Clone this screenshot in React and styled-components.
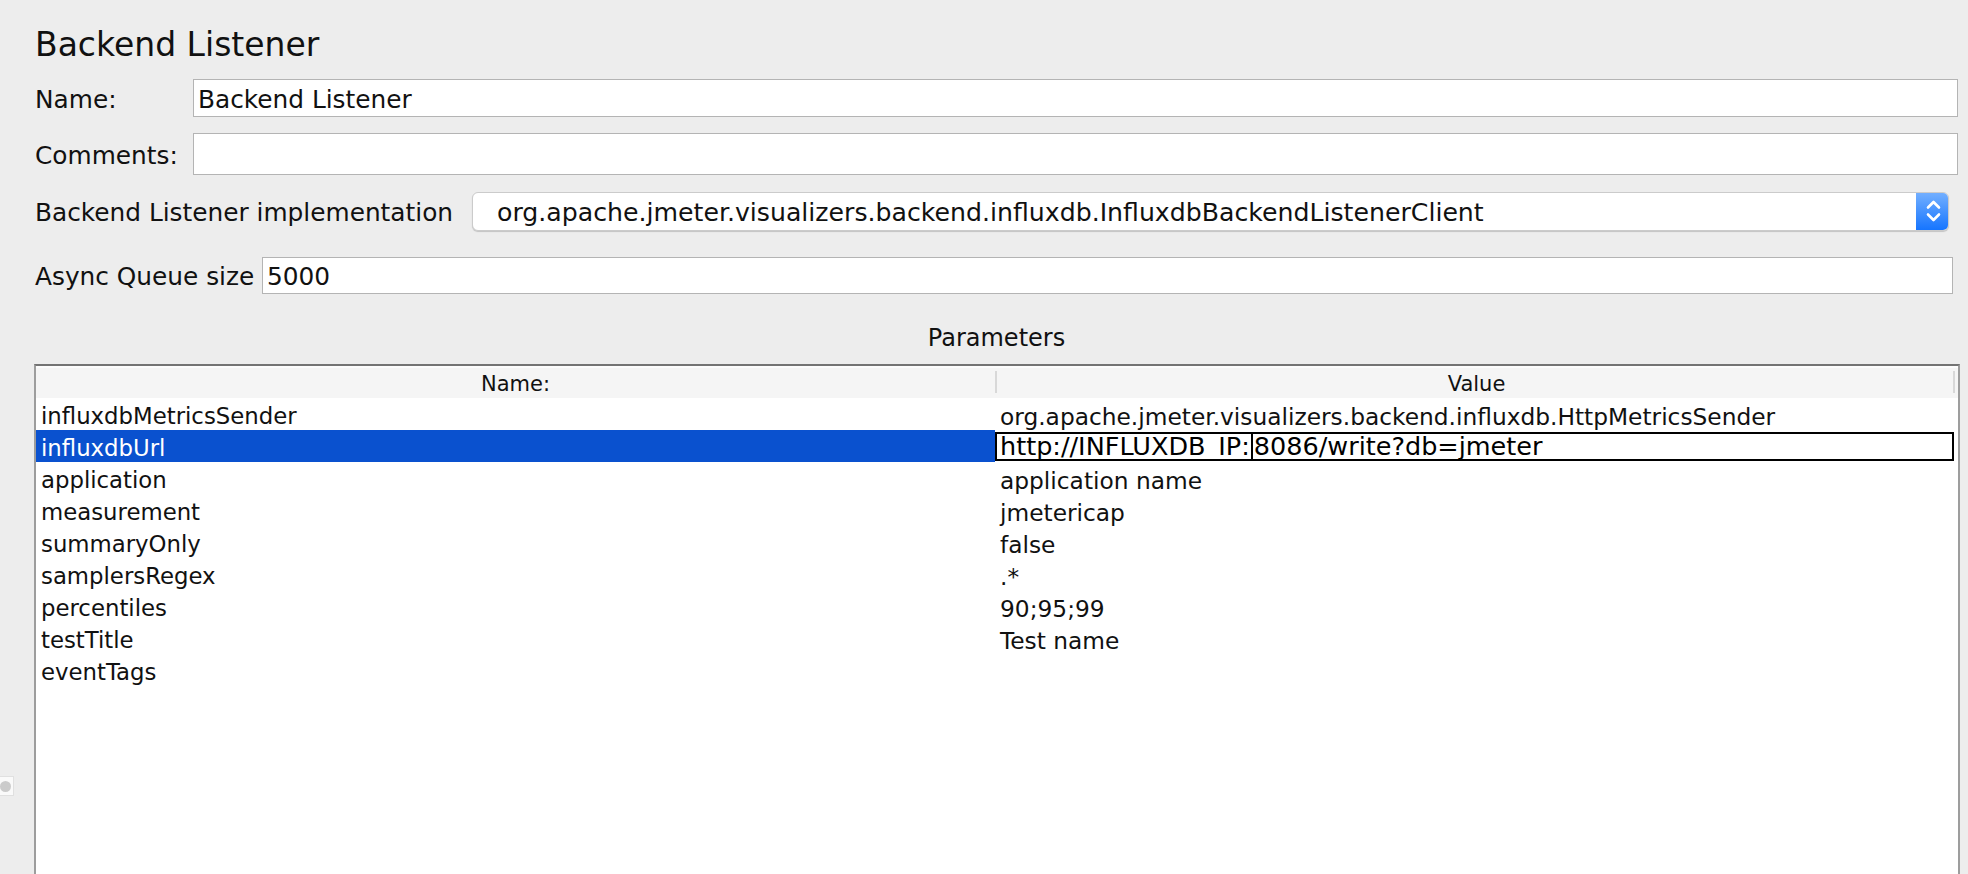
import React from 'react';
import styled, { createGlobalStyle } from 'styled-components';

const Global = createGlobalStyle`
  html, body { margin: 0; padding: 0; background: #ededed; }
  body { font-family: "DejaVu Sans", "Noto Sans", sans-serif; color: #111; }
  * { box-sizing: border-box; }
`;

const Page = styled.div`
  position: relative;
  height: 874px;
  overflow: hidden;
  padding: 26px 10px 0 35px;
  display: flex;
  flex-direction: column;
`;

const Title = styled.h1`
  margin: 0;
  font-weight: normal;
  font-size: 33px;
  line-height: 38px;
  height: 38px;
  color: #111;
`;

const FormRow = styled.div`
  display: flex;
  align-items: center;
  margin-top: ${p => p.$gap}px;
  margin-right: ${p => p.$inset || 0}px;
  height: ${p => p.$h}px;
`;

const Label = styled.label`
  flex: none;
  width: ${p => p.$w}px;
  font-size: 24.8px;
  white-space: nowrap;
  padding-top: 2px;
`;

const TextField = styled.div`
  flex: 1;
  height: 100%;
  background: #fff;
  border: 1px solid #b4b4b4;
  font-size: 24.8px;
  padding: 2px 0 0 4px;
  display: flex;
  align-items: center;
  white-space: nowrap;
`;

const Combo = styled.div`
  flex: 1;
  height: 100%;
  display: flex;
  background: #fff;
  border: 1px solid #cbcbcb;
  border-radius: 6px;
  box-shadow: 0 1px 1px rgba(0, 0, 0, 0.18);
  overflow: hidden;
`;

const ComboText = styled.div`
  flex: 1;
  display: flex;
  align-items: center;
  padding: 1px 0 0 24px;
  font-size: 25.2px;
  white-space: nowrap;
`;

const ComboArrow = styled.div`
  flex: none;
  width: 32px;
  background: linear-gradient(#72afff, #1675ff);
  display: flex;
  align-items: center;
  justify-content: center;
`;

const Caption = styled.div`
  margin-top: 30px;
  height: 28px;
  line-height: 28px;
  text-align: center;
  font-size: 24px;
`;

const Table = styled.div`
  flex: 1;
  margin: 12px -2px 0 -1px;
  background: #fff;
  border-top: 2px solid #737373;
  border-left: 2px solid #9d9d9d;
  border-right: 2px solid #9d9d9d;
  display: flex;
  flex-direction: column;
`;

const HeaderRow = styled.div`
  display: grid;
  grid-template-columns: 959px 1fr;
  grid-template-rows: 32px;
  height: 32px;
  background: #f5f5f5;
  box-shadow: inset 0 2px 0 #fcfcfc;
`;

const HeaderCell = styled.div`
  position: relative;
  display: flex;
  align-items: center;
  justify-content: center;
  font-size: 21px;
  padding-top: 3px;
  ${p => p.$divided && `
    &::before, &::after {
      content: "";
      position: absolute;
      top: 5px;
      bottom: 5px;
      width: 2px;
      background: #d8d8d8;
    }
    &::before { left: 0; }
    &::after { right: 3px; }
  `}
`;

const BodyRow = styled.div`
  display: grid;
  grid-template-columns: 959px 1fr;
  grid-template-rows: 32px;
  height: 32px;
  flex: none;
`;

const Cell = styled.div`
  display: flex;
  align-items: center;
  padding: 4px 0 0 5px;
  font-size: ${p => (p.$value ? '23.3px' : '22.8px')};
  white-space: nowrap;
  overflow: hidden;
  background: ${p => (p.$selected ? '#0a51cf' : 'transparent')};
  color: ${p => (p.$selected ? '#fff' : '#111')};
`;

const EditorCell = styled.div`
  display: flex;
  height: 32px;
  padding: 2px 4px 1px 0;
`;

const Editor = styled.div`
  flex: 1;
  display: flex;
  align-items: center;
  border: 2px solid #000;
  padding: 0 0 0 3px;
  font-size: 25.5px;
  line-height: 25px;
  white-space: nowrap;
  color: #000;
`;

const Caret = styled.span`
  align-self: stretch;
  width: 2px;
  margin: 0 1px;
  background: #000;
  flex: none;
`;

const SplitHandle = styled.div`
  position: absolute;
  left: 0;
  top: 776px;
  width: 14px;
  height: 20px;
  background: #fafafa;
  border: 1px solid #e0e0e0;
  border-left: none;
  display: flex;
  align-items: center;
  &::after {
    content: "";
    width: 11px;
    height: 11px;
    border-radius: 50%;
    background: #cbcbcb;
  }
`;

const params = [
  ['influxdbMetricsSender', 'org.apache.jmeter.visualizers.backend.influxdb.HttpMetricsSender'],
  ['influxdbUrl', 'http://INFLUXDB_IP:8086/write?db=jmeter', true],
  ['application', 'application name'],
  ['measurement', 'jmetericap'],
  ['summaryOnly', 'false'],
  ['samplersRegex', '.*'],
  ['percentiles', '90;95;99'],
  ['testTitle', 'Test name'],
  ['eventTags', ''],
];

const Chevrons = () => (
  <svg width="32" height="39" viewBox="0 0 32 39">
    <path d="M12 15.5 L17.5 10 L23 15.5" stroke="#fff" strokeWidth="2.6" fill="none" strokeLinecap="round" strokeLinejoin="round" />
    <path d="M12 22.5 L17.5 28 L23 22.5" stroke="#fff" strokeWidth="2.6" fill="none" strokeLinecap="round" strokeLinejoin="round" />
  </svg>
);

export default function App() {
  return (
    <>
      <Global />
      <Page>
        <Title>Backend Listener</Title>
        <FormRow $gap={15} $h={38}>
          <Label $w={158}>Name:</Label>
          <TextField>Backend Listener</TextField>
        </FormRow>
        <FormRow $gap={16} $h={42}>
          <Label $w={158}>Comments:</Label>
          <TextField />
        </FormRow>
        <FormRow $gap={17} $h={39} $inset={9}>
          <Label $w={437}>Backend Listener implementation</Label>
          <Combo>
            <ComboText>org.apache.jmeter.visualizers.backend.influxdb.InfluxdbBackendListenerClient</ComboText>
            <ComboArrow>
              <Chevrons />
            </ComboArrow>
          </Combo>
        </FormRow>
        <FormRow $gap={26} $h={37} $inset={5}>
          <Label $w={227}>Async Queue size</Label>
          <TextField>5000</TextField>
        </FormRow>
        <Caption>Parameters</Caption>
        <Table>
          <HeaderRow>
            <HeaderCell>Name:</HeaderCell>
            <HeaderCell $divided>Value</HeaderCell>
          </HeaderRow>
          {params.map(([name, value, selected]) => (
            <BodyRow key={name}>
              <Cell $selected={selected}>{name}</Cell>
              {selected ? (
                <EditorCell>
                  <Editor>
                    http://INFLUXDB_IP:<Caret />8086/write?db=jmeter
                  </Editor>
                </EditorCell>
              ) : (
                <Cell $value>{value}</Cell>
              )}
            </BodyRow>
          ))}
        </Table>
        <SplitHandle />
      </Page>
    </>
  );
}
